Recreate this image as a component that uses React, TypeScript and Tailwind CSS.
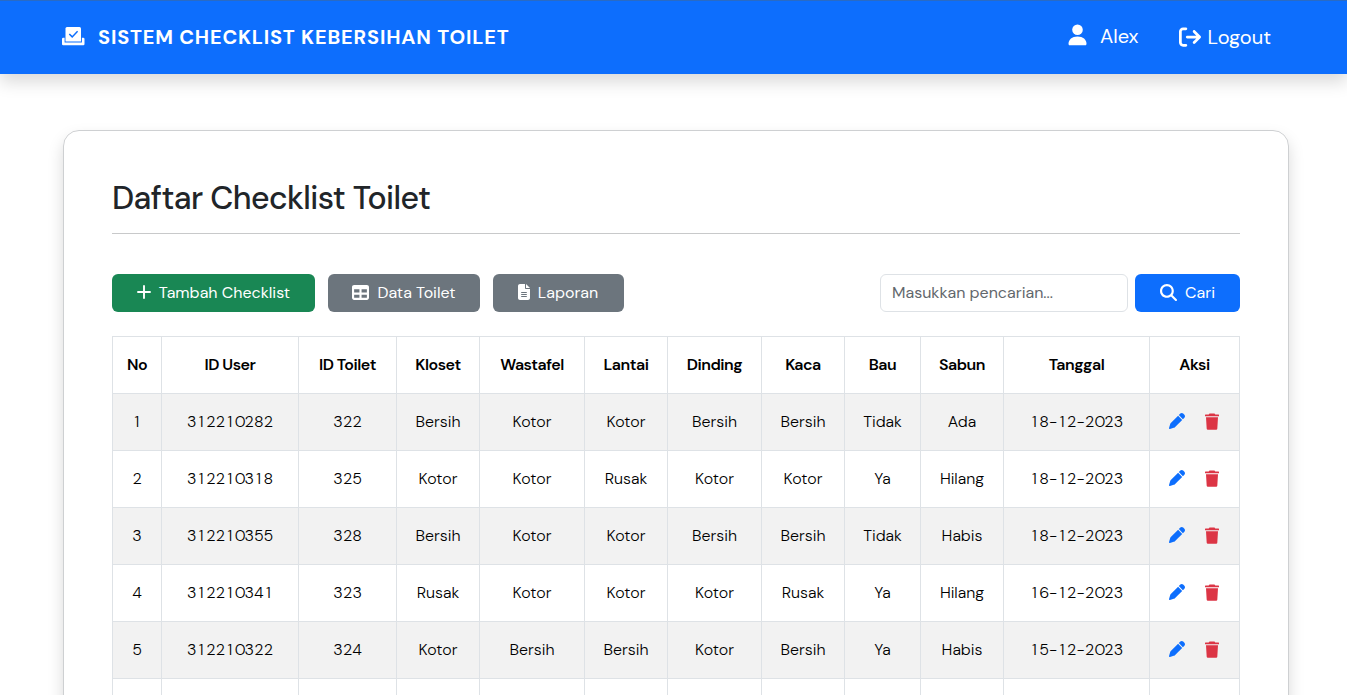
import { ReactNode } from "react";
import { FaPen, FaTable, FaArrowRightFromBracket, FaFileLines, FaMagnifyingGlass } from "react-icons/fa6";

const columns = [
  { name: "No", col: "w-[49px]" },
  { name: "ID User", col: "w-[137px]" },
  { name: "ID Toilet", col: "w-[98px]" },
  { name: "Kloset", col: "w-[83px]" },
  { name: "Wastafel", col: "w-[105px]" },
  { name: "Lantai", col: "w-[83px]" },
  { name: "Dinding", col: "w-[94px]" },
  { name: "Kaca", col: "w-[83px]" },
  { name: "Bau", col: "w-[76px]" },
  { name: "Sabun", col: "w-[83px]" },
  { name: "Tanggal", col: "w-[146px]" },
  { name: "Aksi", col: "w-[90px]" },
];

const rows = [
  ["1", "312210282", "322", "Bersih", "Kotor", "Kotor", "Bersih", "Bersih", "Tidak", "Ada", "18-12-2023"],
  ["2", "312210318", "325", "Kotor", "Kotor", "Rusak", "Kotor", "Kotor", "Ya", "Hilang", "18-12-2023"],
  ["3", "312210355", "328", "Bersih", "Kotor", "Kotor", "Bersih", "Bersih", "Tidak", "Habis", "18-12-2023"],
  ["4", "312210341", "323", "Rusak", "Kotor", "Kotor", "Kotor", "Rusak", "Ya", "Hilang", "16-12-2023"],
  ["5", "312210322", "324", "Kotor", "Bersih", "Bersih", "Kotor", "Bersih", "Ya", "Habis", "15-12-2023"],
  ["", "", "", "", "", "", "", "", "", "", ""],
];

function BallotIcon() {
  return (
    <svg className="mr-[13px] h-[19px] w-[23px]" viewBox="0 0 23 19">
      <path fill="#fff" d="M5 0h12.500a1.500 1.500 0 0 1 1.500 1.500v13h-15.500v-13a1.500 1.500 0 0 1 1.500-1.500z" />
      <path fill="#fff" d="M0 12.100a1.300 1.300 0 0 1 1.300-1.300h1.300v4.800h17.300v-4.800h1.300a1.300 1.300 0 0 1 1.300 1.300v5a1.200 1.200 0 0 1-1.200 1.200H1.200A1.200 1.200 0 0 1 0 17.100z" />
      <path fill="none" stroke="#0d6efd" strokeWidth="1.500" d="M7.300 7l2.900 2.900 5.400-5.600" />
    </svg>
  );
}

function PersonIcon() {
  return (
    <svg className="mr-[13px] mb-[3px] h-[22px] w-[19px]" viewBox="0 0 19 22" fill="currentColor">
      <circle cx="9.500" cy="5.800" r="5.300" />
      <path d="M0.500 19.800C0.500 15.500 4 12.400 9.500 12.400s9 3.100 9 7.400c0 .8-.4 1.500-1 1.500H1.500c-.6 0-1-.7-1-1.500z" />
    </svg>
  );
}

function PlusIcon() {
  return (
    <svg className="mr-2 mb-0.5 size-[14px]" viewBox="0 0 14 14" fill="none" stroke="currentColor" strokeWidth="1.900" strokeLinecap="round">
      <path d="M7 1v12M1 7h12" />
    </svg>
  );
}

function TrashIcon() {
  return (
    <svg className="h-[17px] w-[14px]" viewBox="0 0 14 17" fill="#dc3545">
      <path d="M4.500 0.500h5l.8 1H13.500a.5.5 0 0 1 .5.5v1.300H0V2a.5.5 0 0 1 .5-.5h3.200z" />
      <path d="M1 4.300h12l-.7 11.400a1.100 1.100 0 0 1-1.100 1H2.800a1.100 1.100 0 0 1-1.100-1z" />
    </svg>
  );
}

function Button({ className, children }: { className: string; children: ReactNode }) {
  return <button className={`flex h-[38px] items-center justify-center rounded-md text-[16px] leading-5 text-white ${className}`}>{children}</button>;
}

/** Numbers with every digit in a cell of the same width, so that columns of figures line up. */
function Figures({ value }: { value: string }) {
  return (
    <>
      {value.split("").map((c, i) => (
        <span key={i} className={c === "-" ? "inline-block w-[8.400px]" : "inline-block w-[9.600px]"}>{c}</span>
      ))}
    </>
  );
}

export default function App() {
  return (
    <div className="h-[695px] overflow-hidden bg-white font-['DM_Sans',Inter,sans-serif] text-[#212529]">
      <header className="flex h-[74px] items-center border-t border-[#2a6bc4] bg-[#0d6efd] pr-[76px] pb-0.5 pl-[62px] text-white shadow-[0_8px_16px_rgba(0,0,0,0.15)]">
        <BallotIcon />
        <span className="text-[20px] font-bold tracking-[0.820px]">SISTEM CHECKLIST KEBERSIHAN TOILET</span>
        <div className="ml-auto flex items-center text-[20px]">
          <PersonIcon />
          <span className="pb-0.5">Alex</span>
          <FaArrowRightFromBracket className="mr-[7px] ml-10 size-[22px]" />
          <span>Logout</span>
        </div>
      </header>
      <main className="mt-14 ml-[63px] h-[800px] w-[1226px] rounded-2xl border border-[#ced0d2] px-12 pt-[46px] shadow-[0_8px_16px_rgba(0,0,0,0.15)]">
        <h1 className="h-[57px] border-b border-[#c8c9ca] text-[32px] leading-[43px] font-medium tracking-[-0.600px]">Daftar Checklist Toilet</h1>
        <div className="mt-10 flex h-[38px]">
          <Button className="w-[203px] bg-[#198754]"><PlusIcon />Tambah Checklist</Button>
          <Button className="ml-[13px] w-[152px] bg-[#6c757d]"><FaTable className="mr-2 mb-0.5 size-[17px]" />Data Toilet</Button>
          <Button className="ml-[13px] w-[131px] bg-[#6c757d] pr-[3px]"><FaFileLines className="mr-1.5 mb-0.5 size-4" />Laporan</Button>
          <input className="ml-auto w-[248px] rounded-md border border-[#dee2e6] pr-3 pl-[11px] text-[16px] placeholder:text-[#62676c]" placeholder="Masukkan pencarian..." />
          <Button className="ml-[7px] w-[105px] bg-[#0d6efd]"><FaMagnifyingGlass className="mr-2 mb-0.5 size-[17px]" />Cari</Button>
        </div>
        <table className="mt-6 w-[1128px] table-fixed border-collapse text-center text-[16px] text-black">
          <colgroup>{columns.map((c) => <col key={c.name} className={c.col} />)}</colgroup>
          <thead>
            <tr className="h-[57px]">{columns.map((c) => <th key={c.name} className="border border-[#dee2e6] pb-px font-semibold tracking-[-0.480px]">{c.name}</th>)}</tr>
          </thead>
          <tbody>
            {rows.map((r, i) => (
              <tr key={i} className="h-[57px] odd:bg-[#f2f2f2]">
                {r.map((v, j) => <td key={j} className="border border-[#dee2e6] pb-px font-[350]">{/^\d/.test(v) ? <Figures value={v} /> : v}</td>)}
                <td className="border border-[#dee2e6]">
                  {r[0] && <div className="flex items-center justify-center gap-5 pr-px pb-0.5"><FaPen className="size-4 text-[#0d6efd]" /><TrashIcon /></div>}
                </td>
              </tr>
            ))}
          </tbody>
        </table>
      </main>
    </div>
  );
}
